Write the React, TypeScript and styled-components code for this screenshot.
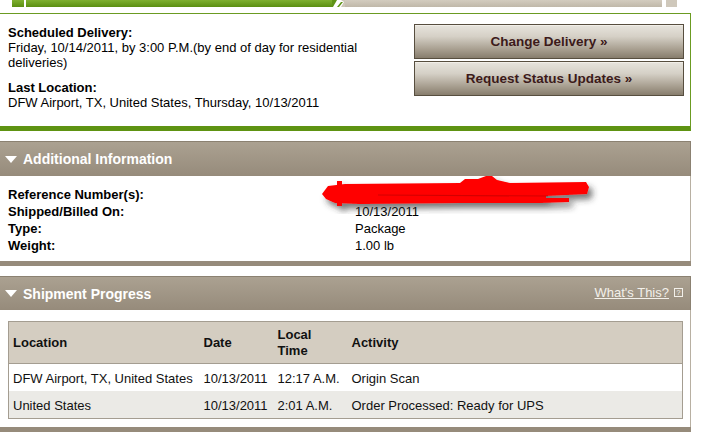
import React from "react";
import styled, { createGlobalStyle } from "styled-components";

const GlobalStyle = createGlobalStyle`
  body {
    margin: 0;
    background: #ffffff;
    font-family: "Liberation Sans", Arial, sans-serif;
    font-size: 13px;
    color: #000000;
  }
`;

const Page = styled.div`
  width: 691px;
`;

const ProgressStrip = styled.div`
  display: flex;
  height: 7px;
  padding-left: 12px;
`;

const StripGreen = styled.div<{ $w: number }>`
  width: ${(p) => p.$w}px;
  height: 7px;
  background: linear-gradient(#7fb030, #5b8f12);
`;

const StripSlit = styled.div`
  width: 2px;
`;

const StripBeige = styled.div`
  width: 317px;
  height: 7px;
  background: linear-gradient(#d3ccbf, #c0b8a9);
`;

const StripEnd = styled.div`
  width: 11px;
  height: 7px;
  margin-left: 4px;
  background: #cfc8bb;
`;

const SummaryBox = styled.div`
  box-sizing: border-box;
  margin-top: 6px;
  height: 118px;
  display: flex;
  justify-content: space-between;
  border-top: 1px solid #6b9b22;
  border-right: 1px solid #6b9b22;
  border-bottom: 5px solid #5e9312;
`;

const SummaryText = styled.div`
  width: 380px;
  padding: 11px 0 0 8px;
`;

const InfoBlock = styled.div`
  line-height: 15px;
  & + & {
    margin-top: 10px;
  }
`;

const InfoLabel = styled.div`
  font-weight: bold;
`;

const ButtonColumn = styled.div`
  display: flex;
  flex-direction: column;
  gap: 2px;
  padding: 10px 6px 0 0;
`;

const ActionButton = styled.button`
  box-sizing: border-box;
  width: 270px;
  height: 35px;
  border: 1px solid #574e3f;
  box-shadow: inset 0 1px 0 #f2efe9;
  background: linear-gradient(#e7e4dd 0%, #d5d0c6 35%, #a69d8e 75%, #877d6d 100%);
  font-family: "Liberation Sans", Arial, sans-serif;
  font-size: 13.5px;
  font-weight: bold;
  color: #3c1a1a;
  cursor: pointer;
`;

const Section = styled.div`
  margin-top: 10px;
`;

const SectionHeader = styled.div<{ $h: number }>`
  box-sizing: border-box;
  height: ${(p) => p.$h}px;
  display: flex;
  align-items: center;
  justify-content: space-between;
  padding: 0 7px 0 5px;
  border-top: 1px solid #8b8171;
  border-right: 1px solid #8b8171;
  background: linear-gradient(#aba191, #968b7b);
`;

const HeaderTitle = styled.div`
  display: flex;
  align-items: center;
  gap: 6px;
  color: #ffffff;
  font-size: 14px;
  font-weight: bold;
`;

const Caret = styled.span`
  width: 0;
  height: 0;
  border-left: 6px solid transparent;
  border-right: 6px solid transparent;
  border-top: 7px solid #ffffff;
`;

const HelpLink = styled.a`
  align-self: flex-start;
  margin-top: 8px;
  display: flex;
  align-items: center;
  gap: 5px;
  color: #f3f0ea;
  font-size: 13px;
  line-height: 15px;
  text-decoration: underline;
`;

const HelpIcon = styled.span`
  box-sizing: border-box;
  width: 9px;
  height: 9px;
  border: 1px solid #f3f0ea;
  font-size: 7px;
  line-height: 7px;
  text-align: center;
  text-decoration: none;
  display: inline-block;
`;

const SectionBody = styled.div`
  position: relative;
  border-right: 1px solid #b8b0a2;
`;

const SectionBand = styled.div`
  height: 5px;
  background: #968b7b;
`;

const DetailGrid = styled.div`
  display: grid;
  grid-template-columns: 347px auto;
  padding: 10px 0 7px 8px;
  line-height: 17px;
`;

const DetailLabel = styled.div`
  font-weight: bold;
`;

const Redaction = styled.svg`
  position: absolute;
  left: 318px;
  top: 0;
`;

const ProgressBody = styled.div`
  padding: 11px 7px 8px 8px;
`;

const Table = styled.table`
  width: 100%;
  border-collapse: collapse;
  table-layout: fixed;
  border: 1px solid #a49d91;
`;

const HeadCell = styled.th<{ $w?: number }>`
  box-sizing: border-box;
  ${(p) => (p.$w ? `width: ${p.$w}px;` : "")}
  height: 42px;
  padding: 0 4px;
  background: #d4cdc1;
  border-bottom: 1px solid #a49d91;
  text-align: left;
  vertical-align: middle;
  font-size: 13px;
  line-height: 16px;
  color: #111111;
`;

const Row = styled.tr<{ $alt?: boolean }>`
  background: ${(p) => (p.$alt ? "#ebeae6" : "#ffffff")};
`;

const Cell = styled.td`
  height: 26px;
  padding: 1px 4px 0;
  white-space: nowrap;
  vertical-align: middle;
  color: #111111;
`;

const details = [
  { label: "Reference Number(s):", value: "" },
  { label: "Shipped/Billed On:", value: "10/13/2011" },
  { label: "Type:", value: "Package" },
  { label: "Weight:", value: "1.00 lb" },
];

const progress = [
  { location: "DFW Airport, TX, United States", date: "10/13/2011", time: "12:17 A.M.", activity: "Origin Scan" },
  { location: "United States", date: "10/13/2011", time: "2:01 A.M.", activity: "Order Processed: Ready for UPS" },
];

export default function App() {
  return (
    <Page>
      <GlobalStyle />
      <ProgressStrip>
        <StripGreen $w={12} />
        <StripSlit />
        <StripGreen $w={306} />
        <svg width="13" height="7" viewBox="0 0 13 7">
          <polygon points="0,0 5,0 1,7 0,7" fill="#5f9316" />
          <polygon points="5,7 9,2 11,2 7,7" fill="#5f9316" />
          <polygon points="9,0 13,0 13,7 9,7 12,2" fill="#cdc6b8" />
        </svg>
        <StripBeige />
        <StripEnd />
      </ProgressStrip>

      <SummaryBox>
        <SummaryText>
          <InfoBlock>
            <InfoLabel>Scheduled Delivery:</InfoLabel>
            <div>Friday, 10/14/2011, by 3:00 P.M.(by end of day for residential deliveries)</div>
          </InfoBlock>
          <InfoBlock>
            <InfoLabel>Last Location:</InfoLabel>
            <div>DFW Airport, TX, United States, Thursday, 10/13/2011</div>
          </InfoBlock>
        </SummaryText>
        <ButtonColumn>
          <ActionButton>Change Delivery »</ActionButton>
          <ActionButton>Request Status Updates »</ActionButton>
        </ButtonColumn>
      </SummaryBox>

      <Section>
        <SectionHeader $h={35}>
          <HeaderTitle>
            <Caret />
            Additional Information
          </HeaderTitle>
        </SectionHeader>
        <SectionBody>
          <DetailGrid>
            {details.map(({ label, value }) => (
              <React.Fragment key={label}>
                <DetailLabel>{label}</DetailLabel>
                <div>{value}</div>
              </React.Fragment>
            ))}
          </DetailGrid>
          <Redaction width="285" height="38" viewBox="0 0 285 38">
            <defs>
              <filter id="smudge" x="-10%" y="-40%" width="120%" height="200%">
                <feDropShadow dx="4" dy="5" stdDeviation="3" floodColor="#333333" floodOpacity="0.65" />
              </filter>
            </defs>
            <g filter="url(#smudge)" fill="#ff0000">
              <polygon points="4,18 10,10 27,8 142,7 147,3 160,3 168,0 174,0 179,4 192,7 268,6 271,11 269,18 228,20 228,22 251,22 251,26 222,27 142,27 42,28 17,27 8,23" />
              <rect x="19" y="5" width="5" height="25" />
            </g>
            <path d="M60 19 L230 20" stroke="#a00000" strokeWidth="1.2" opacity="0.45" />
          </Redaction>
        </SectionBody>
        <SectionBand />
      </Section>

      <Section>
        <SectionHeader $h={34}>
          <HeaderTitle>
            <Caret />
            Shipment Progress
          </HeaderTitle>
          <HelpLink>
            What's This?
            <HelpIcon>?</HelpIcon>
          </HelpLink>
        </SectionHeader>
        <SectionBody>
          <ProgressBody>
            <Table>
              <thead>
                <tr>
                  <HeadCell $w={191}>Location</HeadCell>
                  <HeadCell $w={74}>Date</HeadCell>
                  <HeadCell $w={74}>
                    Local
                    <br />
                    Time
                  </HeadCell>
                  <HeadCell>Activity</HeadCell>
                </tr>
              </thead>
              <tbody>
                {progress.map((p, i) => (
                  <Row key={p.time} $alt={i % 2 === 1}>
                    <Cell>{p.location}</Cell>
                    <Cell>{p.date}</Cell>
                    <Cell>{p.time}</Cell>
                    <Cell>{p.activity}</Cell>
                  </Row>
                ))}
              </tbody>
            </Table>
          </ProgressBody>
        </SectionBody>
        <SectionBand />
      </Section>
    </Page>
  );
}
